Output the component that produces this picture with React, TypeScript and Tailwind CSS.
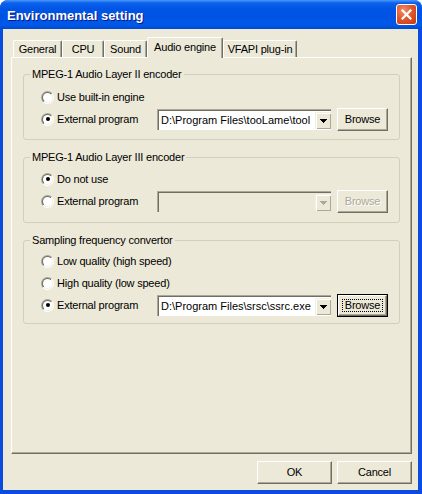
import React from "react";

const face = "bg-[#ece9d8]";

function Radio({ checked }: { checked?: boolean }) {
  return (
    <div className="w-[13px] h-[13px] rounded-full p-[1px] bg-[linear-gradient(135deg,#aca899_50%,#ffffff_50%)] shrink-0">
      <div className="w-full h-full rounded-full p-[1px] bg-[linear-gradient(135deg,#716f64_50%,#f1efe2_50%)]">
        <div className="w-full h-full rounded-full bg-white flex items-center justify-center">
          {checked && <div className="w-[4px] h-[4px] rounded-full bg-black" />}
        </div>
      </div>
    </div>
  );
}

function Button({
  label,
  w,
  h = 23,
  disabled,
  focused,
}: {
  label: string;
  w: string;
  h?: number;
  disabled?: boolean;
  focused?: boolean;
}) {
  const inner = (
    <div
      className={`relative h-full w-full ${face} border-t border-l border-white border-r border-b border-r-[#716f64] border-b-[#716f64] shadow-[inset_-1px_-1px_0_#aca899] flex items-center justify-center`}
    >
      <span
        className={
          disabled
            ? "text-[#aca899] [text-shadow:1px_1px_0_#ffffff]"
            : "text-black"
        }
      >
        {label}
      </span>
      {focused && (
        <div className="absolute inset-[3px] border border-dotted border-black" />
      )}
    </div>
  );
  return (
    <div
      className={`${w} shrink-0 ${focused ? "border border-black" : ""}`}
      style={{ height: h }}
    >
      {inner}
    </div>
  );
}

function Combo({ value, disabled }: { value?: string; disabled?: boolean }) {
  return (
    <div className="w-[174px] h-[21px] shrink-0 border-t border-l border-[#aca899] border-r-white border-b-white">
      <div
        className={`h-full w-full border-t border-l border-[#716f64] border-r-[#f1efe2] border-b-[#f1efe2] flex items-center ${
          disabled ? face : "bg-white"
        }`}
      >
        <div className="flex-1 overflow-hidden whitespace-nowrap pl-[2px] leading-[13px] tracking-normal">
          {value}
        </div>
        <div
          className={`w-[16px] h-[17px] shrink-0 ${face} border-t border-l border-[#f1efe2] border-r-[#716f64] border-b-[#716f64] shadow-[inset_1px_1px_0_#ffffff,inset_-1px_-1px_0_#aca899] flex items-center justify-center`}
        >
          <svg width="7" height="4" viewBox="0 0 7 4">
            <path
              d="M0 0h7v1H0zM1 1h5v1H1zM2 2h3v1H2zM3 3h1v1H3z"
              fill={disabled ? "#aca899" : "#000000"}
            />
          </svg>
        </div>
      </div>
    </div>
  );
}

function Row({
  label,
  checked,
  labelWidth,
  children,
}: {
  label: string;
  checked?: boolean;
  labelWidth?: string;
  children?: React.ReactNode;
}) {
  return (
    <div className="flex items-center h-[22px]">
      <Radio checked={checked} />
      <span className={`ml-[3px] whitespace-nowrap ${labelWidth ?? ""}`}>
        {label}
      </span>
      {children}
    </div>
  );
}

function Group({
  title,
  height,
  pad,
  children,
}: {
  title: string;
  height: string;
  pad: string;
  children: React.ReactNode;
}) {
  return (
    <fieldset
      className={`w-[377px] ${height} border border-[#d0d0bf] rounded-[3px] p-0 m-0`}
    >
      <legend className="ml-[6px] px-[2px] leading-[13px]">{title}</legend>
      <div className={`pl-[17px] ${pad}`}>{children}</div>
    </fieldset>
  );
}

const tabs = [
  { name: "General", w: "w-[49px]" },
  { name: "CPU", w: "w-[42px]" },
  { name: "Sound", w: "w-[43px]" },
  { name: "Audio engine", w: "w-[76px]", active: true },
  { name: "VFAPI plug-in", w: "w-[74px]" },
];

export default function App() {
  return (
    <div
      className="w-[422px] h-[494px] bg-white text-[11px] tracking-[-0.2px] text-black"
      style={{ fontFamily: '"Liberation Sans", Arial, sans-serif' }}
    >
      <div className="w-full h-full rounded-t-[8px] bg-[#0a4ce0] flex flex-col overflow-hidden">
        {/* title bar */}
        <div className="h-[29px] shrink-0 flex items-center justify-between pl-[7px] pr-[5px] bg-[linear-gradient(180deg,#4a9bfc_0%,#0c61ec_10%,#0055e5_30%,#0053e2_60%,#0059ea_85%,#0049d0_100%)]">
          <span className="text-white font-bold text-[13px] tracking-normal mt-[2px] [text-shadow:1px_1px_0_#0a1883]">
            Environmental setting
          </span>
          <div className="w-[21px] h-[21px] rounded-[3px] border border-white bg-[radial-gradient(circle_at_35%_30%,#f0906c_0%,#e2582f_45%,#c8360b_100%)] flex items-center justify-center">
            <svg width="11" height="11" viewBox="0 0 11 11">
              <path
                d="M1.5 1.5l8 8M9.5 1.5l-8 8"
                stroke="#ffffff"
                strokeWidth="2.2"
                strokeLinecap="square"
              />
            </svg>
          </div>
        </div>

        {/* client area */}
        <div className={`flex-1 ml-[3px] mr-[4px] mb-[4px] ${face} flex flex-col pt-[8px]`}>
          <div className="flex h-[20px] items-end ml-[10px]">
            {tabs.map((t) =>
              t.active ? (
                <div
                  key={t.name}
                  className={`${t.w} h-[21px] self-start relative z-10 ${face} border-t border-l border-white border-r border-r-[#716f64] rounded-t-[2px] shadow-[inset_-1px_0_0_#aca899] flex items-center justify-center pb-[1px]`}
                >
                  {t.name}
                </div>
              ) : (
                <div
                  key={t.name}
                  className={`${t.w} h-[17px] ${face} border-t border-l border-white border-r border-r-[#716f64] rounded-t-[2px] shadow-[inset_-1px_0_0_#aca899] flex items-center justify-center`}
                >
                  {t.name}
                </div>
              )
            )}
          </div>

          <div className="ml-[8px] w-[401px] h-[397px] border-t border-l border-white border-r border-b border-r-[#716f64] border-b-[#716f64] shadow-[inset_-1px_-1px_0_#aca899] pt-[10px] pl-[11px] flex flex-col gap-[11px]">
            <Group title="MPEG-1 Audio Layer II encoder" height="h-[72px]" pad="pt-[5px]">
              <Row label="Use built-in engine" />
              <Row label="External program" checked labelWidth="w-[100px]">
                <Combo value="D:\Program Files\tooLame\tool" />
                <div className="ml-[6px]">
                  <Button label="Browse" w="w-[51px]" />
                </div>
              </Row>
            </Group>

            <Group title="MPEG-1 Audio Layer III encoder" height="h-[72px]" pad="pt-[4px]">
              <Row label="Do not use" checked />
              <Row label="External program" labelWidth="w-[100px]">
                <Combo disabled />
                <div className="ml-[6px]">
                  <Button label="Browse" w="w-[51px]" disabled />
                </div>
              </Row>
            </Group>

            <Group title="Sampling frequency convertor" height="h-[90px]" pad="pt-[3px]">
              <Row label="Low quality (high speed)" />
              <Row label="High quality (low speed)" />
              <Row label="External program" checked labelWidth="w-[100px]">
                <Combo value="D:\Program Files\srsc\ssrc.exe" />
                <div className="ml-[6px]">
                  <Button label="Browse" w="w-[51px]" focused />
                </div>
              </Row>
            </Group>
          </div>

          <div className="flex justify-end gap-[5px] mt-[7px] pr-[6px]">
            <Button label="OK" w="w-[75px]" />
            <Button label="Cancel" w="w-[75px]" />
          </div>
        </div>
      </div>
    </div>
  );
}
